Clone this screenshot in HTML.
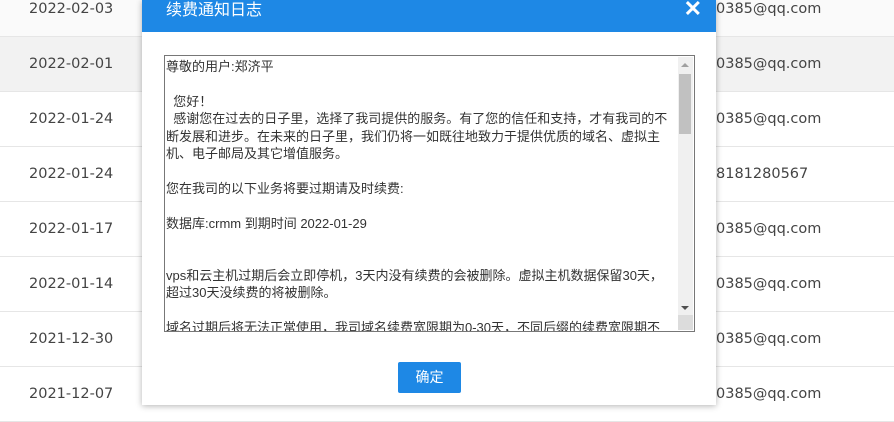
<!DOCTYPE html>
<html><head><meta charset="utf-8"><style>
body{margin:0;width:894px;height:415px;overflow:hidden;position:relative;font-family:"Liberation Sans","Noto Sans CJK SC",sans-serif;background:#fff}
.row{position:absolute;left:0;width:894px;height:55px;border-bottom:1px solid #e6e6e6;font-size:14.5px;color:#444;box-sizing:border-box;font-family:"DejaVu Sans",sans-serif}
.row .d{position:absolute;left:29px;top:50%;transform:translateY(-50%)}
.row .e{position:absolute;left:716px;top:50%;transform:translateY(-50%)}
.vl{position:absolute;top:0;width:1px;height:415px;background:#eee}
.dlg{position:absolute;left:142px;top:0;width:574px;height:405px;background:#fff;box-shadow:0 1px 6px rgba(0,0,0,.3)}
.hd{height:32px;background:#1e88e5;color:#fff;font-size:16px;line-height:22px;padding-left:24px}
.x{position:absolute;right:14px;top:-2px;font-size:22px;color:#fff;font-weight:bold}
.ta{position:absolute;left:22px;top:55px;width:531px;height:277px;border:1px solid #777;box-sizing:border-box;overflow:hidden;font-size:13px;line-height:17.4px;color:#333;padding:2px 22px 0 1px;white-space:pre-wrap}
.sb{position:absolute;right:1px;top:1px;width:15px;height:259px;background:#f0f0f0}
.th{position:absolute;left:1px;top:17px;width:12px;height:60px;background:#c1c1c1}
.up,.dn{position:absolute;left:3px;width:0;height:0;border-left:4px solid transparent;border-right:4px solid transparent}
.up{top:6px;border-bottom:4px solid #a0a0a0}
.dn{bottom:6px;border-top:4px solid #505050}
.grip{position:absolute;right:1px;bottom:1px;width:15px;height:15px;background:#dcdcdc}
.btn{position:absolute;left:256px;top:362px;width:63px;height:31px;background:#1e88e5;color:#fff;font-size:14px;line-height:31px;text-align:center;border-radius:2px}
</style></head><body>
<div class="vl" style="left:253px"></div><div class="vl" style="left:467px"></div>
<div class="row" style="top:-18px;background:#fafafa"><span class="d">2022-02-03</span><span class="e">0385@qq.com</span></div>
<div class="row" style="top:37px;background:#f2f2f2"><span class="d">2022-02-01</span><span class="e">0385@qq.com</span></div>
<div class="row" style="top:92px;background:#fff"><span class="d">2022-01-24</span><span class="e">0385@qq.com</span></div>
<div class="row" style="top:147px;background:#fff"><span class="d">2022-01-24</span><span class="e">8181280567</span></div>
<div class="row" style="top:202px;background:#fff"><span class="d">2022-01-17</span><span class="e">0385@qq.com</span></div>
<div class="row" style="top:257px;background:#fff"><span class="d">2022-01-14</span><span class="e">0385@qq.com</span></div>
<div class="row" style="top:312px;background:#fff"><span class="d">2021-12-30</span><span class="e">0385@qq.com</span></div>
<div class="row" style="top:367px;background:#fff"><span class="d">2021-12-07</span><span class="e">0385@qq.com</span></div>
<div class="dlg">
<div class="hd">续费通知日志<span class="x">✕</span></div>
<div class="ta">尊敬的用户:郑济平

  您好！
  感谢您在过去的日子里，选择了我司提供的服务。有了您的信任和支持，才有我司的不断发展和进步。在未来的日子里，我们仍将一如既往地致力于提供优质的域名、虚拟主机、电子邮局及其它增值服务。

您在我司的以下业务将要过期请及时续费:

数据库:crmm 到期时间 2022-01-29


vps和云主机过期后会立即停机，3天内没有续费的会被删除。虚拟主机数据保留30天，
超过30天没续费的将被删除。

域名过期后将无法正常使用，我司域名续费宽限期为0-30天，不同后缀的续费宽限期不同<div class="sb"><div class="up"></div><div class="th"></div><div class="dn"></div></div><div class="grip"></div></div>
<div class="btn">确定</div>
</div>
</body></html>
